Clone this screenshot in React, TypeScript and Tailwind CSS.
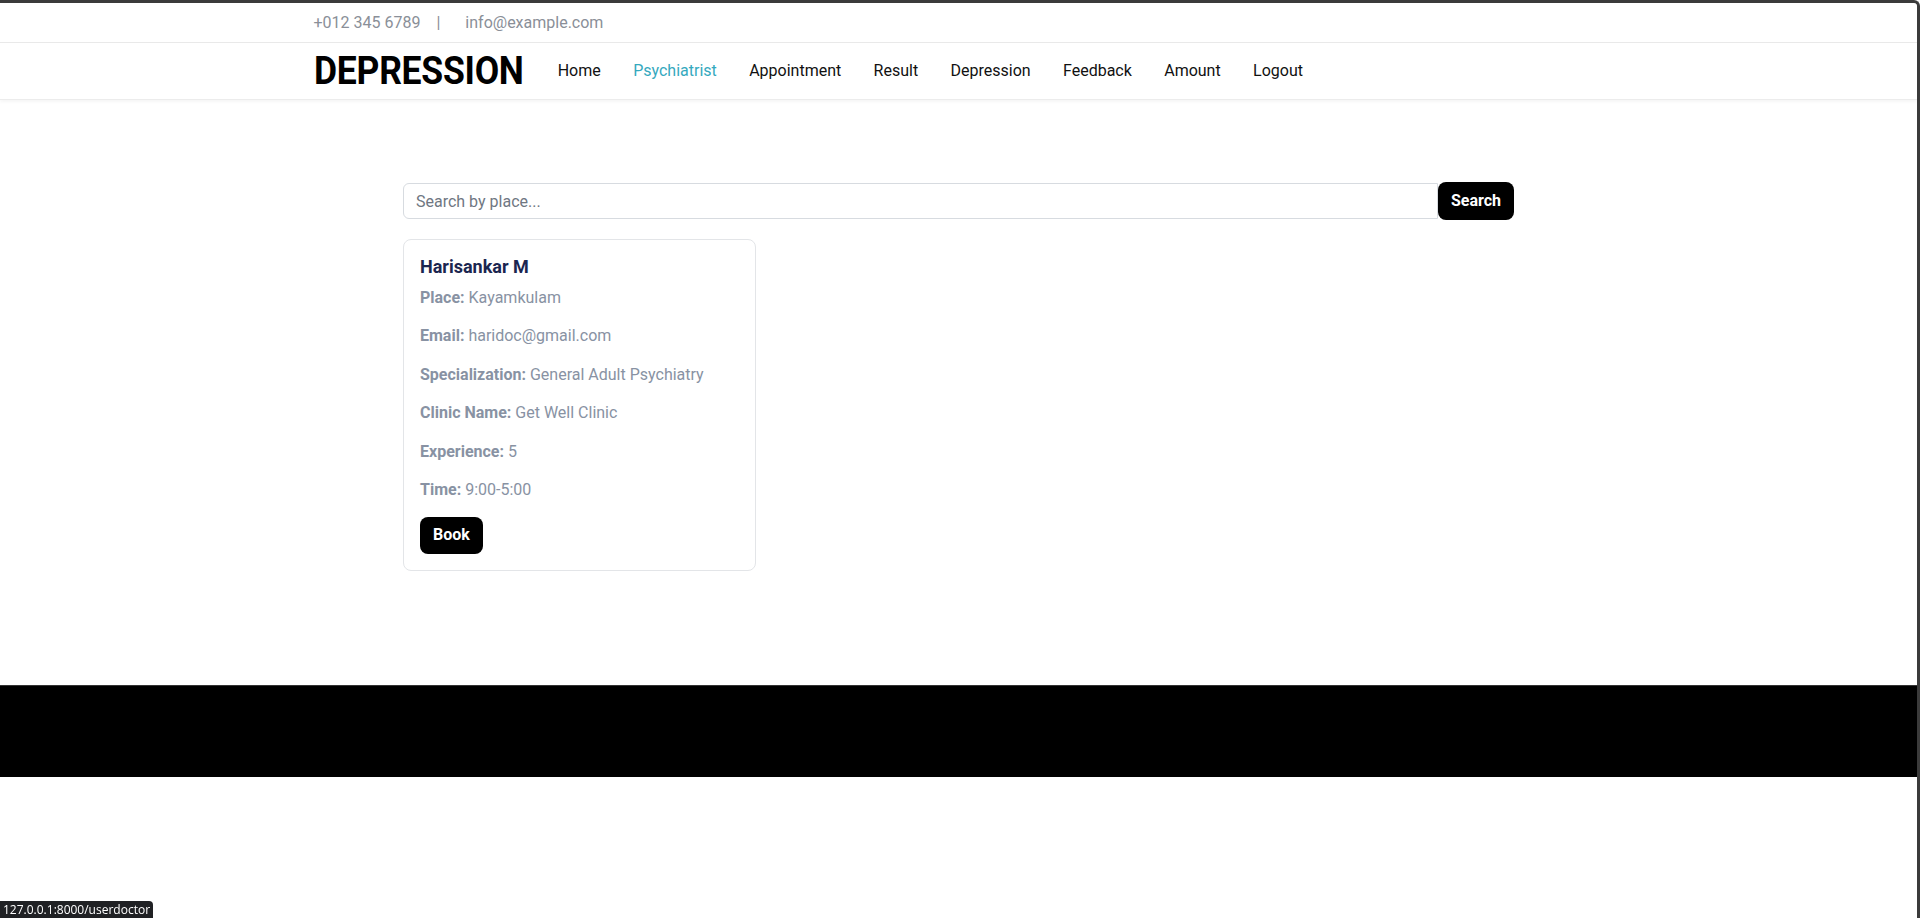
import React, { useState } from "react";

const navItems = ["Home", "Psychiatrist", "Appointment", "Result", "Depression", "Feedback", "Amount", "Logout"];

const doctor = {
  name: "Harisankar M",
  fields: [
    ["Place", "Kayamkulam"],
    ["Email", "haridoc@gmail.com"],
    ["Specialization", "General Adult Psychiatry"],
    ["Clinic Name", "Get Well Clinic"],
    ["Experience", "5"],
    ["Time", "9:00-5:00"],
  ],
};

export const App: React.FC = () => {
  const [place, setPlace] = useState<string>("");

  return (
    <div className="min-h-screen bg-white font-['Roboto',sans-serif] border-t-[3px] border-r-[3px] border-[#3b3b3b] rounded-tr-[6px]">
      {/* top bar */}
      <div className="h-[40px] border-b border-[#e9e9e9]">
        <div className="w-[1290px] mx-auto h-full flex items-center text-base text-[#8a8f98]">
          <span>+012 345 6789</span>
          <span className="ml-[16px] mr-[25px]">|</span>
          <span>info@example.com</span>
        </div>
      </div>

      {/* navbar */}
      <div className="h-[57px] border-b border-[#ececec] shadow-[0_2px_3px_rgba(0,0,0,0.04)]">
        <div className="w-[1290px] mx-auto h-full flex items-center">
          <div className="w-[211px] mr-[17px] mt-[1px]">
            <span className="inline-block origin-left scale-x-[0.935] whitespace-nowrap text-[38px] font-bold text-black tracking-[-0.3px] leading-none">
              DEPRESSION
            </span>
          </div>
          <div className="flex items-center text-base">
            {navItems.map((item) => (
              <a
                key={item}
                className={
                  "px-[16.2px] cursor-pointer " +
                  (item === "Psychiatrist" ? "text-[#35a9be]" : "text-[#111]")
                }
              >
                {item}
              </a>
            ))}
          </div>
        </div>
      </div>

      {/* content */}
      <div className="w-[1111px] mx-auto pt-[82px] pb-[114px]">
        <div className="flex items-center">
          <input
            type="text"
            placeholder="Search by place..."
            className="flex-1 h-[36px] px-3 text-base text-[#333] placeholder:text-[#6f7782] border border-[#d7dbe0] rounded-l-md outline-none"
            value={place}
            onChange={(e) => setPlace(e.target.value)}
          />
          <button className="h-[38px] px-[13px] bg-black text-white font-bold text-base rounded-lg">Search</button>
        </div>

        <div className="mt-[19px] w-[353px] border border-[#e3e5e8] rounded-lg p-4">
          <div className="text-[18px] font-bold text-[#1b2650] leading-[1.2] mb-2">{doctor.name}</div>
          {doctor.fields.map(([label, value]) => (
            <p key={label} className="text-base leading-6 text-[#8892a3] mb-[14.5px]">
              <b className="font-bold">{label}:</b> {value}
            </p>
          ))}
          <button className="h-[37px] px-[13px] bg-black text-white font-bold text-base rounded-lg">Book</button>
        </div>
      </div>

      {/* footer */}
      <div className="h-[92px] bg-black border-t border-[#333]"></div>

      {/* browser status link */}
      <div className="fixed bottom-0 left-0 h-[17px] px-[3px] bg-[#202124] text-white text-[12px] leading-[17px] font-['Open_Sans',sans-serif] rounded-tr">
        127.0.0.1:8000/userdoctor
      </div>
    </div>
  );
};

export default App;
